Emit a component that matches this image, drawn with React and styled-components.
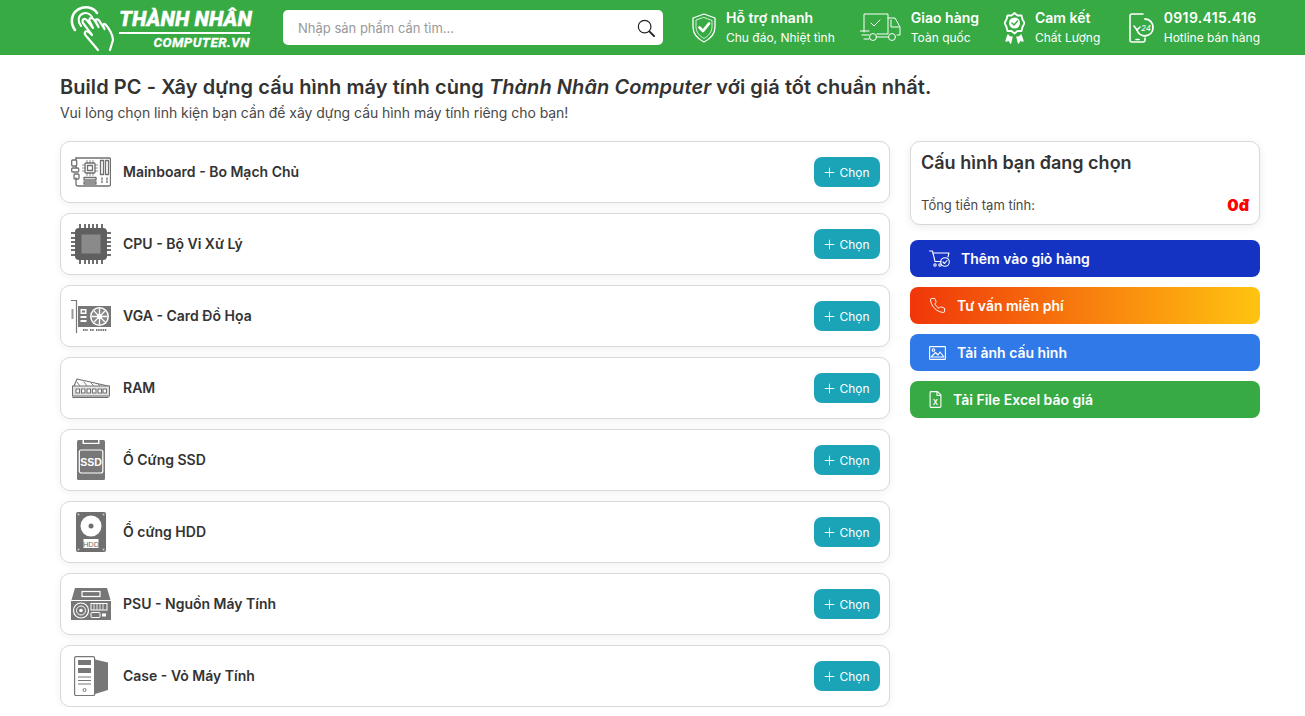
import React from 'react';
import styled, { createGlobalStyle } from 'styled-components';
import { Plus } from 'lucide-react';

const GlobalStyle = createGlobalStyle`
    html, body {
        margin: 0;
        padding: 0;
        background: #fff;
        overflow: hidden;
        font-family: "Inter", "Noto Sans", sans-serif;
        color: #333;
    }
    * { box-sizing: border-box; }
`;

const Header = styled.header`
    height: 55px;
    background: #37aa44;
    padding: 0 45px 0 60px;
    display: flex;
    align-items: center;
`;

const Logo = styled.div`
    width: 223px;
    height: 55px;
    padding-left: 8px;
    display: flex;
    align-items: center;
    gap: 3px;
    flex: none;
`;

const LogoText = styled.div`
    display: flex;
    flex-direction: column;
    align-items: flex-start;
    color: #fff;
    font-family: "Roboto", "Liberation Sans", sans-serif;
    font-style: italic;
    font-weight: 900;
    width: 136px;
    padding-top: 2px;
    -webkit-text-stroke: 0.3px #fff;
`;

const LogoName = styled.div`
    font-size: 21px;
    line-height: 23px;
    white-space: nowrap;
    letter-spacing: 0.1px;
`;

const LogoRule = styled.div`
    width: 131px;
    height: 2px;
    margin-top: 1px;
    background: #fff;
`;

const LogoSub = styled.div`
    align-self: flex-end;
    font-size: 13.5px;
    line-height: 16px;
    font-weight: 700;
    letter-spacing: 0.45px;
    padding-right: 5px;
`;

const Search = styled.div`
    width: 380px;
    height: 35px;
    background: #fff;
    border-radius: 5px;
    padding: 0 8px 0 15px;
    display: flex;
    align-items: center;
    justify-content: space-between;
    flex: none;
`;

const SearchHint = styled.span`
    font-size: 13px;
    color: #999;
`;

const Features = styled.div`
    flex: 1;
    margin-left: 29px;
    display: flex;
    gap: 25px;
    align-items: center;

    & > :last-child {
        margin-left: auto;
    }
`;

const Feature = styled.div`
    display: flex;
    align-items: center;
    gap: 10px;
    color: #fff;
    white-space: nowrap;
`;

const FeatureTitle = styled.div`
    font-size: 14px;
    font-weight: 600;
    line-height: 20px;
    letter-spacing: ${props => props.$spaced ? '0.35px' : '0'};
`;

const FeatureSub = styled.div`
    font-size: 12px;
    line-height: 20px;
`;

const Main = styled.main`
    padding: 20px 45px 0 60px;
`;

const Heading = styled.h1`
    margin: 0;
    font-size: 20px;
    font-weight: 600;
    line-height: 24px;
    letter-spacing: 0.07px;
    color: #333;
`;

const Intro = styled.p`
    margin: 2px 0 0;
    font-size: 14px;
    line-height: 24px;
    letter-spacing: -0.05px;
    color: #484848;
`;

const Columns = styled.div`
    margin-top: 16px;
    display: grid;
    grid-template-columns: 830px 350px;
    gap: 20px;
    align-items: start;
`;

const List = styled.div`
    display: flex;
    flex-direction: column;
    gap: 10px;
`;

const Row = styled.div`
    height: 62px;
    background: #fff;
    border: 1px solid #d9d9d9;
    border-radius: 10px;
    box-shadow: 0 2px 8px rgba(0, 0, 0, 0.06);
    padding: 0 9px 0 10px;
    display: flex;
    align-items: center;
    gap: 12px;
`;

const IconSlot = styled.div`
    width: 40px;
    height: 40px;
    flex: none;
    display: flex;
    align-items: center;
    justify-content: center;
    color: #707070;
`;

const RowName = styled.span`
    flex: 1;
    font-size: 14px;
    font-weight: 600;
    color: #333;
    padding-bottom: 2px;
`;

const PickButton = styled.button`
    width: 66px;
    height: 30px;
    border: none;
    border-radius: 8px;
    background: #1ba3b8;
    color: #fff;
    font-family: inherit;
    font-size: 12px;
    display: flex;
    align-items: center;
    justify-content: center;
    gap: 2px;
    padding: 0 2px 0 0;
`;

const Side = styled.aside`
    display: flex;
    flex-direction: column;
    gap: 10px;
`;

const Summary = styled.div`
    height: 84px;
    margin-bottom: 5px;
    background: #fff;
    border: 1px solid #d9d9d9;
    border-radius: 10px;
    box-shadow: 0 2px 8px rgba(0, 0, 0, 0.08);
    padding: 10px 10px 9px;
    display: flex;
    flex-direction: column;
    justify-content: space-between;
`;

const SummaryTitle = styled.div`
    font-size: 18px;
    font-weight: 600;
    line-height: 22px;
    color: #333;
`;

const SummaryTotal = styled.div`
    display: flex;
    align-items: center;
    justify-content: space-between;
    font-size: 13px;
    color: #484848;
`;

const Price = styled.span`
    font-size: 16px;
    font-weight: 900;
    color: #f00;
`;

const ActionButton = styled.button`
    height: 37px;
    border: none;
    border-radius: 8px;
    background: ${props => props.$bg};
    color: #fff;
    font-family: inherit;
    font-size: 14px;
    font-weight: 600;
    padding: 0 0 0 19px;
    display: flex;
    align-items: center;
    gap: 11px;
    text-align: left;
`;

const Stroke = ({ w, h, sw = 1.4, children }) => (
    <svg width={w} height={h} viewBox={`0 0 ${w} ${h}`} fill="none" stroke="currentColor" strokeWidth={sw} strokeLinecap="round" strokeLinejoin="round">
        {children}
    </svg>
);

const HandLogo = () => (
    <svg width="48" height="48" viewBox="0 0 48 48" fill="none" stroke="#fff" strokeLinecap="round" strokeLinejoin="round" style={{ flex: 'none' }}>
        <path d="M7 26C2 19 3 10 10 5.500C17 1.500 25 3 29 9" strokeWidth="2.600" />
        <path d="M13 22C9.500 18 10 12 14 10C18 8 22 9.500 24 13" strokeWidth="2" />
        <path d="M30 46L19 33C17 31 16 29 17.500 27.500C19 26.500 21 28 24 31L15 19C14 17 14.500 15.500 16 15C17.500 14.500 18.500 15.500 20 17.500L25 24L21.500 17C21 15 22 14 23.500 14C25 14 26 15.500 27 17L30.500 23L27.500 17C27.500 15.500 28.500 15 30 15.500C31 16 32 17.500 33 19.500L36.500 25L35 21.500C35 20 36 19.500 37.500 20.500C41 24 45 31 45 36L42 46" strokeWidth="2.200" />
    </svg>
);

const SearchIcon = () => (
    <svg width="18" height="18" viewBox="0 0 20 20" fill="none" stroke="#222" strokeLinecap="round">
        <circle cx="8.500" cy="8.500" r="7" strokeWidth="1.300" />
        <path d="M14 14L19 19" strokeWidth="2.200" />
    </svg>
);

const ShieldIcon = () => (
    <Stroke w={24} h={30} sw={1.300}>
        <path d="M12 1L23 5V14C23 21 18 26 12 29C6 26 1 21 1 14V5Z" />
        <path d="M12 4.500L20 7.500V14C20 19 16.500 23 12 25.500C7.500 23 4 19 4 14V7.500Z" strokeWidth="0.800" />
        <path d="M7.500 14.500L11 18L17 10.500" strokeWidth="2.800" />
    </Stroke>
);

const TruckIcon = () => (
    <Stroke w={41} h={32} sw={1}>
        <path d="M4 20V2H28V22H17" />
        <path d="M11 11L14 14L20 8" />
        <path d="M28 6H35L40 15V23H37" />
        <path d="M31 8V15H39" />
        <circle cx="32" cy="25" r="3.500" />
        <circle cx="13" cy="25" r="3.500" />
        <path d="M0 19H9M2 23H9M4 27H9M17 25H28" />
    </Stroke>
);

const BadgeIcon = () => (
    <Stroke w={21} h={32} sw={1.400}>
        <path d="M10.500 1L13.500 3.500L17.500 3.500L18.500 7.500L20.500 11L18.500 15L17.500 19L13.500 19L10.500 21.500L7.500 19L3.500 19L2.500 15L0.500 11L2.500 7.500L3.500 3.500L7.500 3.500Z" strokeWidth="1.800" />
        <circle cx="10.500" cy="11" r="5.500" fill="#fff" stroke="none" />
        <path d="M8 11L10 13L13.500 9" stroke="#37aa44" strokeWidth="1.400" />
        <path d="M4 23L2 29L5 28L6.500 31L8 25M17 23L19 29L16 28L14.500 31L13 25" fill="#fff" />
    </Stroke>
);

const Phone24Icon = () => (
    <svg width="25" height="30" viewBox="0 0 25 30" fill="none" stroke="#fff" strokeWidth="1.600" strokeLinecap="round" strokeLinejoin="round">
        <path d="M14 1H3C2 1 1 2 1 3V27C1 28 2 29 3 29H14C15 29 16 28 16 27V25" />
        <path d="M16 6C21 6 24 10 24 14.500C24 19 21 22.500 16 23C12 23 9 20 8 17" strokeWidth="1.800" />
        <path d="M5 13L8 17L11 14" />
        <text x="12" y="17.500" fontSize="8" fontStyle="italic" fill="#fff" stroke="none" fontFamily="Inter">24</text>
        <path d="M7 26.500H10" />
    </svg>
);

const MainboardIcon = () => (
    <Stroke w={40} h={30} sw={1.300}>
        <path d="M5 1H38C39 1 39.500 1.500 39.500 2.500V27.500C39.500 28.500 39 29 38 29H7C6 29 5 28 5 27V21" />
        <path d="M5 1V3M5 9V11" />
        <rect x="0.700" y="3" width="5" height="6" rx="1" />
        <rect x="0.700" y="11" width="7" height="4" rx="1" />
        <rect x="3" y="17" width="5" height="5" rx="1" />
        <rect x="14" y="6" width="10" height="10" rx="1" />
        <rect x="16.500" y="8.500" width="5" height="5" />
        <path d="M16 3.500V6M19 3.500V6M22 3.500V6M16 16V18.500M19 16V18.500M22 16V18.500M11.500 8H14M11.500 11H14M11.500 14H14M24 8H26.500M24 11H26.500M24 14H26.500" strokeWidth="0.800" />
        <rect x="29.500" y="3.500" width="3" height="14" />
        <rect x="34.500" y="3.500" width="3" height="14" />
        <rect x="13" y="20.500" width="12" height="2.500" />
        <rect x="13" y="25" width="12" height="2" />
        <path d="M31 21V27M36 21V27" strokeDasharray="1.500 1.500" />
    </Stroke>
);

const CpuIcon = () => (
    <svg width="40" height="40" viewBox="0 0 40 40">
        <rect x="4" y="4" width="32" height="32" rx="4" fill="#5f5f5f" />
        <rect x="10.500" y="10.500" width="19" height="19" fill="#8a8a8a" />
        <path d="M9 0V4M14 0V4M18 0V4M22 0V4M26 0V4M31 0V4M9 36V40M14 36V40M18 36V40M22 36V40M26 36V40M31 36V40M0 9H4M0 14H4M0 18H4M0 22H4M0 26H4M0 31H4M36 9H40M36 14H40M36 18H40M36 22H40M36 26H40M36 31H40" stroke="#707070" strokeWidth="2" />
    </svg>
);

const VgaIcon = () => (
    <svg width="40" height="33" viewBox="0 0 40 33">
        <path d="M0 0.500H5.500V33" fill="none" stroke="#777" strokeWidth="1.200" />
        <rect x="0.500" y="9" width="2" height="10" fill="#999" />
        <rect x="7" y="6" width="33" height="21" fill="#777" />
        <circle cx="28.500" cy="16.500" r="9.500" fill="#fff" />
        <circle cx="28.500" cy="16.500" r="8" fill="#888" />
        <path d="M28.500 8.500V24.500M20.500 16.500H36.500M23 11L34 22M34 11L23 22" stroke="#fff" strokeWidth="1.300" />
        <circle cx="28.500" cy="16.500" r="2.500" fill="#fff" />
        <rect x="9.500" y="9" width="6" height="5" fill="#fff" />
        <rect x="11" y="10.500" width="3" height="2" fill="#777" />
        <rect x="9.500" y="16" width="6" height="2" fill="#fff" />
        <rect x="9.500" y="20" width="6" height="2" fill="#fff" />
        <path d="M12 30H17M19 30H23M25 30H36" stroke="#777" strokeWidth="2" strokeDasharray="1.500 0.700" />
    </svg>
);

const RamIcon = () => (
    <Stroke w={38} h={20} sw={1.100}>
        <path d="M2 8L5 1L36 8" />
        <path d="M5 4L8 8M12 4L15 8M19 5L22 8M26 6L28 8" strokeWidth="0.900" />
        <rect x="0.500" y="8" width="37" height="10" fill="#e4e4e4" />
        <path d="M4 11h3.500v4H4zM9.500 11H13v4H9.500zM15 11h3.500v4H15zM20.500 11H24v4h-3.500zM26 11h3.500v4H26zM31 11h3.500v4H31z" fill="#fff" />
        <path d="M1 19.500H37" strokeWidth="1.300" strokeDasharray="1 1" />
    </Stroke>
);

const SsdIcon = () => (
    <svg width="28" height="40" viewBox="0 0 28 40">
        <rect width="28" height="40" rx="1.500" fill="#777" />
        <rect x="5.500" y="0" width="17" height="4" fill="#fff" />
        <rect x="7" y="0" width="14" height="2.800" fill="#777" />
        <rect x="2.300" y="10" width="23.500" height="23" rx="2" fill="none" stroke="#fff" strokeWidth="1.200" />
        <text x="14" y="25.500" textAnchor="middle" fontFamily="Liberation Sans" fontSize="10.500" fontWeight="700" fill="#fff">SSD</text>
    </svg>
);

const HddIcon = () => (
    <svg width="30" height="40" viewBox="0 0 30 40">
        <rect width="30" height="40" rx="2" fill="#6f6f6f" />
        <circle cx="15" cy="14" r="10.500" fill="#fff" />
        <circle cx="15" cy="14" r="2.500" fill="#6f6f6f" />
        <rect x="7.500" y="27" width="15" height="9" fill="#fff" />
        <text x="15" y="34.500" textAnchor="middle" fontFamily="Liberation Sans" fontSize="7.500" fill="#6f6f6f">HDD</text>
        <circle cx="2.500" cy="2.500" r="1" fill="#ccc" />
        <circle cx="27.500" cy="2.500" r="1" fill="#ccc" />
        <circle cx="2.500" cy="37.500" r="1" fill="#ccc" />
        <circle cx="27.500" cy="37.500" r="1" fill="#ccc" />
    </svg>
);

const PsuIcon = () => (
    <svg width="40" height="32" viewBox="0 0 40 32">
        <path d="M4 0H36L39.500 12H0.500Z" fill="#777" />
        <rect x="11" y="3.500" width="18" height="5" fill="none" stroke="#fff" strokeWidth="1.200" />
        <rect y="13" width="40" height="19" fill="#777" />
        <circle cx="10" cy="22.500" r="7.500" fill="none" stroke="#fff" strokeWidth="1.200" />
        <circle cx="10" cy="22.500" r="4.500" fill="none" stroke="#fff" strokeWidth="1" />
        <circle cx="10" cy="22.500" r="1.800" fill="#fff" />
        <rect x="20" y="15.500" width="16" height="6.500" fill="none" stroke="#fff" strokeWidth="1" />
        <path d="M23 15.500V22M26 15.500V22M29 15.500V22M32 15.500V22" stroke="#fff" strokeWidth="0.800" />
        <rect x="20" y="24.500" width="9" height="5" rx="1" fill="none" stroke="#fff" strokeWidth="1" />
        <rect x="31" y="25.500" width="4" height="3" fill="#fff" />
    </svg>
);

const CaseIcon = () => (
    <svg width="34" height="40" viewBox="0 0 34 40">
        <path d="M21 3.500L34 6.500V34L21 38Z" fill="#777" />
        <rect x="0.600" y="0.600" width="20" height="39" rx="1.500" fill="#fff" stroke="#777" strokeWidth="1.200" />
        <rect x="4" y="4" width="13" height="5" fill="#777" />
        <rect x="4" y="12" width="13" height="5" fill="#777" />
        <path d="M4 21H17M4 24.500H17M4 28H17" stroke="#777" strokeWidth="1.200" />
        <circle cx="10.500" cy="34" r="1.500" fill="none" stroke="#777" strokeWidth="1" />
    </svg>
);

const CartIcon = () => (
    <Stroke w={21} h={17} sw={1.100}>
        <path d="M0.500 1H3.500L6 11.500H12" />
        <path d="M4 3H20L19 7" />
        <circle cx="6" cy="15" r="1.200" />
        <circle cx="11" cy="15" r="1.200" />
        <circle cx="16" cy="12" r="4.300" />
        <path d="M14 12L15.500 13.500L18 10.500" />
    </Stroke>
);

const PhoneIcon = () => (
    <svg width="17" height="17" viewBox="0 0 24 24" fill="none" stroke="#fff" strokeWidth="1.300" strokeLinecap="round" strokeLinejoin="round">
        <path d="M22 16.900v3a2 2 0 0 1-2.200 2a19.800 19.800 0 0 1-8.600-3.100a19.500 19.500 0 0 1-6-6a19.800 19.800 0 0 1-3.100-8.700A2 2 0 0 1 4.100 2h3a2 2 0 0 1 2 1.700c.1 1 .4 1.900.7 2.800a2 2 0 0 1-.5 2.100L8.100 9.900a16 16 0 0 0 6 6l1.300-1.300a2 2 0 0 1 2.100-.4c.9.300 1.800.6 2.800.7a2 2 0 0 1 1.700 2Z" />
    </svg>
);

const ImageIcon = () => (
    <Stroke w={17} h={14} sw={1.100}>
        <rect x="0.600" y="0.600" width="15.800" height="12.800" rx="0.500" />
        <circle cx="4.500" cy="4" r="1.300" />
        <path d="M2 11L6.500 6.500L9 9L11 6L15 11Z" />
    </Stroke>
);

const ExcelIcon = () => (
    <svg width="13" height="17" viewBox="0 0 12 17" fill="none" stroke="#fff" strokeWidth="1.100" strokeLinejoin="round">
        <path d="M0.600 1.500C0.600 1 1 0.600 1.500 0.600H8L11.400 4V15.500C11.400 16 11 16.400 10.500 16.400H1.500C1 16.400 0.600 16 0.600 15.500Z" />
        <path d="M7.500 0.600V4.500H11.400" />
        <text x="6" y="13.500" textAnchor="middle" fontFamily="Inter" fontSize="7.500" fill="#fff" stroke="none">X</text>
    </svg>
);

const parts = [
    { name: 'Mainboard - Bo Mạch Chủ', icon: <MainboardIcon /> },
    { name: 'CPU - Bộ Vi Xử Lý', icon: <CpuIcon /> },
    { name: 'VGA - Card Đồ Họa', icon: <VgaIcon /> },
    { name: 'RAM', icon: <RamIcon /> },
    { name: 'Ổ Cứng SSD', icon: <SsdIcon /> },
    { name: 'Ổ cứng HDD', icon: <HddIcon /> },
    { name: 'PSU - Nguồn Máy Tính', icon: <PsuIcon /> },
    { name: 'Case - Vỏ Máy Tính', icon: <CaseIcon /> },
];

const features = [
    { title: 'Hỗ trợ nhanh', sub: 'Chu đáo, Nhiệt tình', icon: <ShieldIcon /> },
    { title: 'Giao hàng', sub: 'Toàn quốc', icon: <TruckIcon /> },
    { title: 'Cam kết', sub: 'Chất Lượng', icon: <BadgeIcon /> },
    { title: '0919.415.416', sub: 'Hotline bán hàng', icon: <Phone24Icon />, spaced: true },
];

const actions = [
    { label: 'Thêm vào giỏ hàng', bg: '#1533c2', icon: <CartIcon /> },
    { label: 'Tư vấn miễn phí', bg: 'linear-gradient(90deg, #f0360a, #ffc410)', icon: <PhoneIcon /> },
    { label: 'Tải ảnh cấu hình', bg: '#3079e8', icon: <ImageIcon /> },
    { label: 'Tải File Excel báo giá', bg: '#37aa44', icon: <ExcelIcon /> },
];

const App = () => {
    return (
        <>
            <GlobalStyle />
            <Header>
                <Logo>
                    <HandLogo />
                    <LogoText>
                        <LogoName>THÀNH NHÂN</LogoName>
                        <LogoRule />
                        <LogoSub>COMPUTER.VN</LogoSub>
                    </LogoText>
                </Logo>
                <Search>
                    <SearchHint>Nhập sản phẩm cần tìm...</SearchHint>
                    <SearchIcon />
                </Search>
                <Features>
                    {features.map(item => (
                        <Feature key={item.title}>
                            {item.icon}
                            <div>
                                <FeatureTitle $spaced={item.spaced}>{item.title}</FeatureTitle>
                                <FeatureSub>{item.sub}</FeatureSub>
                            </div>
                        </Feature>
                    ))}
                </Features>
            </Header>
            <Main>
                <Heading>
                    Build PC - Xây dựng cấu hình máy tính cùng <i>Thành Nhân Computer</i> với giá tốt chuẩn nhất.
                </Heading>
                <Intro>Vui lòng chọn linh kiện bạn cần để xây dựng cấu hình máy tính riêng cho bạn!</Intro>
                <Columns>
                    <List>
                        {parts.map(part => (
                            <Row key={part.name}>
                                <IconSlot>{part.icon}</IconSlot>
                                <RowName>{part.name}</RowName>
                                <PickButton>
                                    <Plus size={15} strokeWidth={1.5} />
                                    Chọn
                                </PickButton>
                            </Row>
                        ))}
                    </List>
                    <Side>
                        <Summary>
                            <SummaryTitle>Cấu hình bạn đang chọn</SummaryTitle>
                            <SummaryTotal>
                                <span>Tổng tiền tạm tính:</span>
                                <Price>0đ</Price>
                            </SummaryTotal>
                        </Summary>
                        {actions.map(action => (
                            <ActionButton key={action.label} $bg={action.bg}>
                                {action.icon}
                                {action.label}
                            </ActionButton>
                        ))}
                    </Side>
                </Columns>
            </Main>
        </>
    );
};

export default App;
